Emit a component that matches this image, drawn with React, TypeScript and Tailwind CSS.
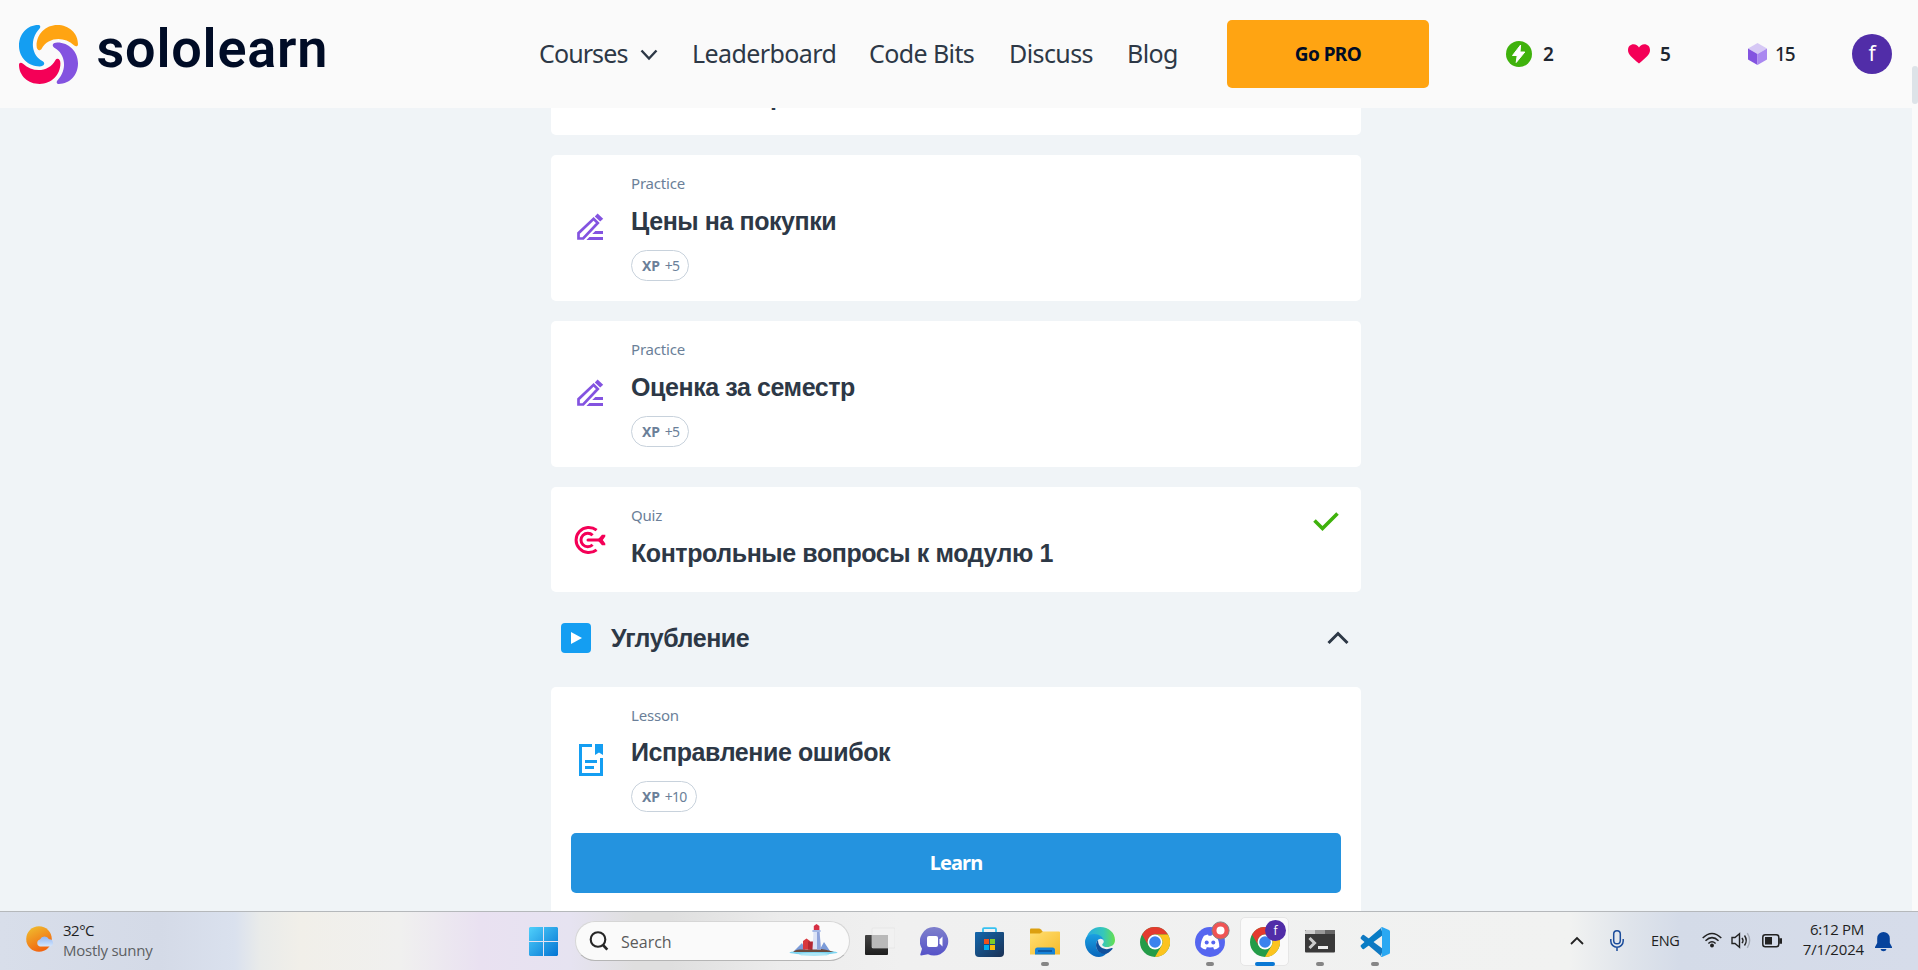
import React from "react";

const UI = "font-['Noto_Sans',sans-serif]";

function Swirl() {
  const d = "M19 0C8 0 0 9 0 20.5C0 32 9 41 20.5 41C25 41 26.3 37.8 23.5 36C12 30 10.5 14 20 4C22 1.8 21 0 19 0Z";
  return (
    <svg width="59" height="59" viewBox="0 0 58.4 58.4" className="shrink-0">
      <path d={d} fill="#149ef2" />
      <path d={d} fill="#ffa412" transform="rotate(90 29.2 29.2)" />
      <path d={d} fill="#8353e0" transform="rotate(180 29.2 29.2)" />
      <path d={d} fill="#f40057" transform="rotate(270 29.2 29.2)" />
    </svg>
  );
}

function PencilIcon() {
  return (
    <svg width="27" height="27" viewBox="0 0 27 27" fill="none">
      <path d="M1.5 25.5V20.2L16.6 5.8L20.8 10L6.2 25.5Z" stroke="#8353e0" strokeWidth="2.7" />
      <path d="M17.8 3.4L20.6 0.6L26.2 5.8L23.2 8.6Z" fill="#8353e0" />
      <path d="M18.3 18H26V21H15.2ZM12.4 24H26V27H9.4Z" fill="#8353e0" />
    </svg>
  );
}

function QuizIcon() {
  return (
    <svg width="32" height="30" viewBox="0 0 32 30" fill="none" stroke="#f40057">
      <path d="M22.6 5.2A12.6 12.6 0 1 0 22.6 24.8" strokeWidth="3" />
      <path d="M18.6 10.2A6.8 6.8 0 1 0 18.6 19.8" strokeWidth="3" />
      <path d="M14 15H26" strokeWidth="3" strokeLinecap="round" />
      <path d="M23.4 15L28 9.8H31.3V11.4L28.8 15L31.3 18.6V20.2H28Z" fill="#f40057" stroke="none" />
    </svg>
  );
}

function LessonIcon() {
  return (
    <svg width="24" height="32" viewBox="0 0 24 32" fill="#149ef2">
      <path d="M0 0H13V3H3V29H21V14H24V32H0Z" />
      <path d="M16 0H24V11L20 8.5L16 11Z" />
      <path d="M6 16H18V19H6ZM6 22H15V25H6Z" />
    </svg>
  );
}

function Pill({ xp }: { xp: string }) {
  return (
    <div className={`flex h-[31px] w-fit items-center rounded-full border border-[#c8d2dc] px-[10px] pr-[9px] text-[14px] leading-none text-[#6b7f99] ${UI}`}>
      <b className="mr-[5px] tracking-[-0.2px]">XP</b>
      <span className="tracking-[-0.7px]">{xp}</span>
    </div>
  );
}

function Title({ children }: { children: React.ReactNode }) {
  return <h3 className="whitespace-nowrap font-['Liberation_Sans',sans-serif] text-[25px] font-bold leading-[30px] tracking-[-0.42px] text-[#2d3846]">{children}</h3>;
}

function Label({ children }: { children: React.ReactNode }) {
  return <div className={`text-[15px] leading-[20px] tracking-[-0.2px] text-[#6b7f99] ${UI}`}>{children}</div>;
}

function Practice({ title }: { title: string }) {
  return (
    <section className="mb-5 flex h-[146px] rounded-[5px] bg-white pt-[18px]">
      <div className="ml-[26px] mt-[40px] w-[54px] shrink-0"><PencilIcon /></div>
      <div>
        <Label>Practice</Label>
        <div className="mb-[14px] mt-[13px]"><Title>{title}</Title></div>
        <Pill xp="+5" />
      </div>
    </section>
  );
}

function Header() {
  return (
    <header className={`relative z-10 flex h-[108px] shrink-0 bg-[#fafafa] ${UI}`}>
      <div className="flex w-[539px] pl-[18.5px] pt-[24.5px]">
        <Swirl />
        <span className="ml-[19px] mt-[-8px] font-['Roboto',sans-serif] text-[54px] font-semibold leading-[64px] tracking-[0.8px] text-[#000c26]">sololearn</span>
      </div>
      <nav className="flex w-[688px] items-center pb-[3px] text-[25px] leading-[30px] tracking-[-0.6px] text-[#2d3846]">
        <span className="w-[101px] tracking-[-0.9px]">Courses</span>
        <svg width="18" height="12" viewBox="0 0 18 12" className="mt-[4px]" fill="none" stroke="#2d3846" strokeWidth="2.4"><path d="M1.5 1.5L9 9.5L16.5 1.5" /></svg>
        <span className="ml-[34px] w-[177px]">Leaderboard</span>
        <span className="w-[140px]">Code Bits</span>
        <span className="w-[118px]">Discuss</span>
        <span>Blog</span>
      </nav>
      <button className="mt-5 h-[68px] w-[202px] rounded-[5px] bg-[#ffa412] text-[19px] font-bold tracking-[-0.6px] text-[#000c26]">Go PRO</button>
      <div className="ml-[77px] flex items-center text-[19px] font-semibold text-[#1e2630]">
        <div className="flex w-[122px] items-center gap-[11px]">
          <svg width="26" height="26" viewBox="0 0 26 26"><circle cx="13" cy="13" r="13" fill="#3fb20c" /><path d="M14.6 4L6.5 14.5H11.2L10.2 21.5L18.8 11H14Z" fill="#fff" stroke="#fff" strokeLinejoin="round" /></svg>
          2
        </div>
        <div className="flex w-[120px] items-center gap-[10px]">
          <svg width="22" height="20" viewBox="0 0 22 20"><path d="M11 19.5C4 13.5 0 10.5 0 6C0 2.5 2.5.3 5.6.3C8 .3 10 1.6 11 3.5C12 1.6 14 .3 16.4.3C19.5.3 22 2.5 22 6C22 10.5 18 13.5 11 19.5Z" fill="#f40057" /></svg>
          5
        </div>
        <div className="flex w-[104px] items-center gap-[8px] font-medium tracking-[-1px]">
          <svg width="19" height="22" viewBox="0 0 19 22"><path d="M9.5 0L19 5.5L9.5 11L0 5.5Z" fill="#d6c8f5" /><path d="M0 5.5L9.5 11V22L0 16.5Z" fill="#8353e0" /><path d="M19 5.5L9.5 11V22L19 16.5Z" fill="#aa88f0" /></svg>
          15
        </div>
        <div className="flex size-10 items-center justify-center rounded-full bg-[#512da8] text-[21px] font-normal text-white">f</div>
      </div>
    </header>
  );
}

function ChromeIcon() {
  return (
    <svg width="30" height="30" viewBox="0 0 30 30">
      <circle cx="15" cy="15" r="15" fill="#249c48" />
      <path d="M2 7.5A15 15 0 0 1 28 7.5H15A7.5 7.5 0 0 0 8.5 18.7Z" fill="#e33b2e" />
      <path d="M28 7.5A15 15 0 0 1 15 30L21.5 18.7A7.5 7.5 0 0 0 15 7.5Z" fill="#fcc31e" />
      <circle cx="15" cy="15" r="7.4" fill="#fff" /><circle cx="15" cy="15" r="5.8" fill="#3b83ee" />
    </svg>
  );
}

function Lighthouse() {
  return (
    <svg width="49" height="34" viewBox="0 0 49 34">
      <ellipse cx="24.5" cy="28.6" rx="24" ry="2" fill="#7cd3ef" /><ellipse cx="25" cy="30.4" rx="15" ry="1.6" fill="#aee6f5" />
      <path d="M5 27L13 19L17 27ZM30 27L35 18L41 27Z" fill="#7b9bd8" />
      <path d="M4 28C9 24 15 26.5 22 25C31 24 38 25.5 45 28Z" fill="#6b4a3c" />
      <path d="M14 17L17.5 14.5L21 17V25.5H14Z" fill="#d8373e" /><path d="M19 17.5H25V25.5H19Z" fill="#b52733" />
      <path d="M24.5 7H30.5L32 25.5H23.5Z" fill="#dbe2f6" /><path d="M28 7H30.5L32 25.5H28Z" fill="#8ea2da" />
      <path d="M24.8 2L27.5 0L30.4 2V6.5H24.8Z" fill="#d62f44" /><path d="M23.4 6H31.6V8H23.4Z" fill="#a6b9e6" />
    </svg>
  );
}

function TaskbarApp({ children, mark, active }: { children: React.ReactNode; mark?: boolean; active?: boolean }) {
  return (
    <div className={active ? "relative mx-[3px] flex h-[49px] w-[49px] items-center justify-center rounded-[5px] border border-[#e6e6e6] bg-[#fafafa]" : "relative flex h-[49px] w-[55px] items-center justify-center"}>
      {children}
      {mark && <i className="absolute bottom-0 left-[calc(50%-4px)] h-1 w-2 rounded-full bg-[#858585]" />}
      {active && <i className="absolute bottom-[-1px] left-[calc(50%-10px)] h-1 w-5 rounded-full bg-[#0a78d4]" />}
    </div>
  );
}

function Taskbar() {
  return (
    <footer className="flex h-[59px] shrink-0 border-t border-[#b5b8bb] bg-[linear-gradient(90deg,#d8deea_0px,#d4dae7_160px,#dae1ee_235px,#e9ebea_260px,#f1efe9_300px,#f0f0ef_400px,#e9e1f1_480px,#e6e3f1_570px,#dfdfdf_635px,#dfdfdf_670px,#ececec_780px,#f0f0f0_900px,#f1f2f1_1570px,#dfe4eb_1630px,#d4dbe8_1680px,#d6dcea_1918px)] font-['Open_Sans',sans-serif] text-[15px] text-[#1f1f1f]">
      <div className="flex w-[529px] pl-[26px] pt-[8px]">
        <svg width="29" height="32" viewBox="0 0 29 32" className="mt-[4px]">
          <defs><linearGradient id="sun" x2=".5" y2="1"><stop stopColor="#efc330" /><stop offset="1" stopColor="#f26511" /></linearGradient><linearGradient id="cloud" x2="0" y2="1"><stop stopColor="#91b6f4" /><stop offset="1" stopColor="#d5e7fd" /></linearGradient></defs>
          <circle cx="13" cy="15" r="12.8" fill="url(#sun)" />
          <path d="M14 22.5A3.6 3.6 0 0 1 14 15.5A5 5 0 0 1 23 15.3A3.7 3.7 0 0 1 24.5 22.5Z" fill="url(#cloud)" />
        </svg>
        <div className="ml-[8px] leading-[20px] tracking-[-0.5px]">
          <div>32°C</div><div className="text-[#5c5f63] tracking-[-0.25px]">Mostly sunny</div>
        </div>
      </div>
      <svg width="29" height="29" viewBox="0 0 29 29" className="mr-[17px] mt-[15px] shrink-0">
        <defs><linearGradient id="win" x2="1" y2="1"><stop stopColor="#50d0fb" /><stop offset="1" stopColor="#0374d3" /></linearGradient></defs>
        <path d="M1 0H14V14H0V1ZM15 0H28L29 1V14H15ZM0 15H14V29H1L0 28ZM15 15H29V28L28 29H15Z" fill="url(#win)" />
      </svg>
      <div className="mt-[9px] flex h-10 w-[275px] items-center rounded-full border border-b-[#b5b5b5] border-[#d6d6d6] bg-[#fafafa] pl-[13px]">
        <svg width="20" height="20" viewBox="0 0 20 20" fill="none" stroke="#252525" strokeWidth="2.1"><circle cx="9" cy="8.5" r="7.3" /><path d="M14 14L18.3 18.6" strokeWidth="2.6" /></svg>
        <span className="ml-[12px] mt-px flex-1 text-[16px] text-[#5a5a5a]">Search</span>
        <div className="mr-[11px]"><Lighthouse /></div>
      </div>
      <div className="ml-[2px] mt-[5px] flex h-[49px] items-center">
        <TaskbarApp><svg width="30" height="30" viewBox="0 0 30 30"><defs><linearGradient id="tv" x2="0" y2="1"><stop stopColor="#444" /><stop offset="1" stopColor="#1e1e1e" /></linearGradient></defs><rect y="8" width="23" height="20" rx="1" fill="url(#tv)" /><rect x="7" y="1" width="23" height="20" rx="1" fill="#f1f1f1" stroke="#e0e0e0" strokeWidth=".6" /><path d="M7 8H23V21H8L7 20Z" fill="#b9b9b9" /></svg></TaskbarApp>
        <TaskbarApp><svg width="29" height="29" viewBox="0 0 29 29"><defs><linearGradient id="ch" x2="0" y2="1"><stop stopColor="#7f80cc" /><stop offset="1" stopColor="#5552c8" /></linearGradient></defs><path d="M14.5 0A14.3 14.3 0 1 1 8 27.3L1 28.5Q0 28.5 .4 27L2 21.7A14.3 14.3 0 0 1 14.5 0Z" fill="url(#ch)" /><rect x="7" y="9" width="11" height="11" rx="2" fill="#fff" /><path d="M19.5 12.5L22.5 9.6V19.4L19.5 16.5Z" fill="#fff" /></svg></TaskbarApp>
        <TaskbarApp><svg width="29" height="30" viewBox="0 0 29 30"><defs><linearGradient id="st" x2="1" y2="1"><stop stopColor="#1367ad" /><stop offset="1" stopColor="#1b3154" /></linearGradient></defs><path d="M8 6V2Q8 1.2 9 1.2H20Q21 1.2 21 2V6" fill="none" stroke="#36c1f1" strokeWidth="1.8" /><path d="M0 6Q0 5 1 5H28Q29 5 29 6V26Q29 30 25 30H4Q0 30 0 26Z" fill="url(#st)" /><path d="M9 12H14V17H9Z" fill="#f1511b" /><path d="M15 12H20V17H15Z" fill="#80cc28" /><path d="M9 18H14V23H9Z" fill="#00adef" /><path d="M15 18H20V23H15Z" fill="#fbbc09" /></svg></TaskbarApp>
        <TaskbarApp mark><svg width="30" height="27" viewBox="0 0 30 27"><defs><linearGradient id="fo" x2="1" y2="1"><stop stopColor="#ffdf72" /><stop offset="1" stopColor="#f7bb2b" /></linearGradient></defs><path d="M0 1.5Q0 .5 1 .5H9Q10 .5 11 1.5L13 4V8H0Z" fill="#dca010" /><path d="M0 5.5H10L13 3.5H29Q30 3.5 30 4.5V26.5H0Z" fill="url(#fo)" /><path d="M5 26.5V22Q5 19.5 7.5 19.5H22.5Q25 19.5 25 22V26.5Z" fill="#1683d8" /><path d="M8 23H22" stroke="#0b4b91" strokeWidth="1.4" /></svg></TaskbarApp>
        <TaskbarApp><svg width="30" height="30" viewBox="0 0 30 30"><defs><linearGradient id="e1" x2="1"><stop stopColor="#28a9e5" /><stop offset=".6" stopColor="#35c7ba" /><stop offset="1" stopColor="#66e04e" /></linearGradient><linearGradient id="e2" x2="0" y2="1"><stop stopColor="#1ba0e2" /><stop offset="1" stopColor="#0866bb" /></linearGradient></defs><path d="M1 12C3 4 9 0 15 0C24 0 30 6 30 13C30 18 26 20 22 20C18 20 16 18 18 16.5C20 14 18 9 12 9C7 9 3 12 1 12Z" fill="url(#e1)" /><path d="M0 15C0 10 4 7 9 7C16 7 19 12 19 14C16 9 11 13 11 18C11 24 16 27 22 26C19 29 16 30 14 30C6 30 0 23 0 15Z" fill="url(#e2)" /><path d="M13 13C9 17 11 26 19 27C22 27 25 25 27.5 22C28 21 27 20.7 26 21.3C21 23.5 13 21.5 13 13Z" fill="#11509c" /></svg></TaskbarApp>
        <TaskbarApp><ChromeIcon /></TaskbarApp>
        <TaskbarApp mark>
          <svg width="30" height="30" viewBox="0 0 30 30"><circle cx="15" cy="15" r="15" fill="#5566f0" /><path d="M9 8.8Q11 7.8 13 7.5L13.6 8.8H16.4L17 7.5Q19 7.8 21 8.8Q24.5 14 24.3 20Q22 22 19.4 22.6L18 20.5Q19 20.2 20 19.5Q15 21.5 10 19.5Q11 20.2 12 20.5L10.6 22.6Q8 22 5.7 20Q5.5 14 9 8.8Z" fill="#fff" /><circle cx="11.7" cy="15.6" r="2" fill="#5566f0" /><circle cx="18.3" cy="15.6" r="2" fill="#5566f0" /></svg>
          <svg width="19" height="19" viewBox="0 0 19 19" className="absolute right-[7px] top-[4px]"><circle cx="9.5" cy="9.5" r="8.6" fill="#f05454" stroke="#858080" /><circle cx="9.5" cy="9.5" r="4" fill="#fff" /></svg>
        </TaskbarApp>
        <TaskbarApp active><ChromeIcon /><span className="absolute right-[2px] top-[2px] flex size-[21px] items-center justify-center rounded-full bg-[#512da8] text-[12px] leading-none text-white">f</span></TaskbarApp>
        <TaskbarApp mark><svg width="30" height="23" viewBox="0 0 30 23"><rect width="30" height="22.5" rx="1" fill="#393939" /><path d="M1 0H10V4H0V1Z" fill="#cecece" /><path d="M10 0H20V4H10Z" fill="#999" /><path d="M20 0H29L30 1V4H20Z" fill="#666" /><path d="M4.5 8L9.5 13L4.5 18" stroke="#ccc" strokeWidth="3" fill="none" /><path d="M13 16H23V19H13Z" fill="#eee" /></svg></TaskbarApp>
        <TaskbarApp mark><svg width="30" height="30" viewBox="0 0 30 30"><path d="M1 10Q0 11 1 12L21 29L23 22L4 8Q3 7.5 2.3 8.3Z" fill="#1079c2" /><path d="M1 20Q0 19 1 18L21 1L23 8L4 22Q3 22.5 2.3 21.7Z" fill="#087cc5" /><path d="M22 0L29 3Q30 3.5 30 4.5V25.5Q30 26.5 29 27L22 30Q21 30 20.5 29Q22 29 22 27.5V2.5Q22 1 20.5 1Z" fill="#2aa8f2" /></svg></TaskbarApp>
      </div>
      <div className="ml-auto mr-[26px] flex items-center pb-[7px]">
        <svg width="14" height="9" viewBox="0 0 14 9" className="mr-[26px] mt-[6px]" fill="none" stroke="#222" strokeWidth="1.8"><path d="M1 8L7 2L13 8" /></svg>
        <svg width="14" height="21" viewBox="0 0 14 21" className="mr-[27px] mt-[6px]" fill="none" stroke="#1b4c9b" strokeWidth="1.5"><rect x="3.7" y=".8" width="6.6" height="13" rx="3.3" /><path d="M.8 9V11A6.2 6.2 0 0 0 13.2 11V9M7 17V21" /></svg>
        <span className="mr-[22px] mt-[6px] w-[29px] text-[14.5px] tracking-[-0.3px]">ENG</span>
        <svg width="20" height="16" viewBox="0 0 20 16" className="mr-[9px] mt-[4px]" fill="none" stroke="#222" strokeWidth="1.5"><path d="M.7 6Q10-3 19.3 6M3.5 8.8Q10 2.5 16.5 8.8M6.4 11.5Q10 8 13.6 11.5" /><circle cx="10" cy="13.5" r="1.2" fill="#222" /></svg>
        <svg width="21" height="17" viewBox="0 0 21 17" className="mr-[10px] mt-[6px]" fill="none" stroke="#222" strokeWidth="1.4"><path d="M1 5.5H4L8.5 1.8V15.2L4 11.5H1Z" /><path d="M11 5.8Q13 8.5 11 11.2M13.5 3.5Q17 8.5 13.5 13.5" /><path d="M16.3 1.2Q21 8.5 16.3 15.8" stroke="#a6acb7" /></svg>
        <svg width="20" height="14" viewBox="0 0 20 14" className="mr-[21px] mt-[6px]" fill="none" stroke="#222" strokeWidth="1.5"><rect x=".8" y=".8" width="16" height="12" rx="2.5" /><path d="M3 3H10V10.5H3Z" fill="#222" stroke="none" /><path d="M18 5H19.5V9H18Z" fill="#222" /></svg>
        <div className="mr-[11px] mt-[3px] flex w-[61px] flex-col items-end whitespace-nowrap leading-[20px]"><div className="tracking-[-0.3px]">6:12 PM</div><div className="tracking-[-0.15px]">7/1/2024</div></div>
        <svg width="17" height="20" viewBox="0 0 17 20" className="mt-[8px]" fill="#07439c"><path d="M8.5 0A6.3 6.3 0 0 1 14.8 6.3V11L17 15V16H0V15L2.2 11V6.3A6.3 6.3 0 0 1 8.5 0ZM5.5 17H11.5Q11 19.3 8.5 19.3Q6 19.3 5.5 17Z" /></svg>
      </div>
    </footer>
  );
}

export default function App() {
  return (
    <div className="flex h-[970px] w-[1918px] flex-col overflow-hidden bg-[#f0f4f7]">
      <div className="flex h-[911px] shrink-0">
        <div className="flex w-[1912px] flex-col overflow-hidden">
          <Header />
          <main className="mx-auto w-[810px]">
            <section className="mb-5 h-[27px] rounded-b-[5px] bg-white pl-[219px]">
              <div className="h-[3px]"><div className="relative top-[-27px]"><Title>р</Title></div></div>
            </section>
            <Practice title="Цены на покупки" />
            <Practice title="Оценка за семестр" />
            <section className="flex h-[105px] rounded-[5px] bg-white pt-[18px]">
              <div className="ml-[23px] mt-[20px] w-[57px] shrink-0"><QuizIcon /></div>
              <div className="flex-1"><Label>Quiz</Label><div className="mt-[13px]"><Title>Контрольные вопросы к модулю 1</Title></div></div>
              <svg width="26" height="20" viewBox="0 0 26 20" className="mr-[22px] mt-[7px]" fill="none" stroke="#3fb20c" strokeWidth="3.6"><path d="M1.5 8.5L9.5 16.5L24.5 1.5" /></svg>
            </section>
            <section className="flex h-[95px] items-center pb-[3px] pl-[10px] pr-[12px]">
              <svg width="30" height="30" viewBox="0 0 30 30" className="mr-[20px]"><rect width="30" height="30" rx="4" fill="#149ef2" /><path d="M10 9L21 15L10 21Z" fill="#fff" /></svg>
              <Title>Углубление</Title>
              <svg width="22" height="14" viewBox="0 0 22 14" className="ml-auto" fill="none" stroke="#2d3846" strokeWidth="3"><path d="M1.5 12L11 2.5L20.5 12" /></svg>
            </section>
            <section className="h-[240px] rounded-t-[5px] bg-white px-5 pt-[18px]">
              <div className="flex">
                <div className="ml-[8px] mt-[39px] w-[52px] shrink-0"><LessonIcon /></div>
                <div><Label>Lesson</Label><div className="mb-[14px] mt-[12px]"><Title>Исправление ошибок</Title></div><Pill xp="+10" /></div>
              </div>
              <button className={`mt-[21px] h-[60px] w-full rounded-[5px] bg-[#2493df] text-[20px] font-bold tracking-[-0.9px] text-white ${UI}`}>Learn</button>
            </section>
          </main>
        </div>
        <div className="w-[6px] bg-[#fafafa] pt-[66px]"><div className="h-[38px] rounded-[3px] bg-[#dde3e8]" /></div>
      </div>
      <Taskbar />
    </div>
  );
}
